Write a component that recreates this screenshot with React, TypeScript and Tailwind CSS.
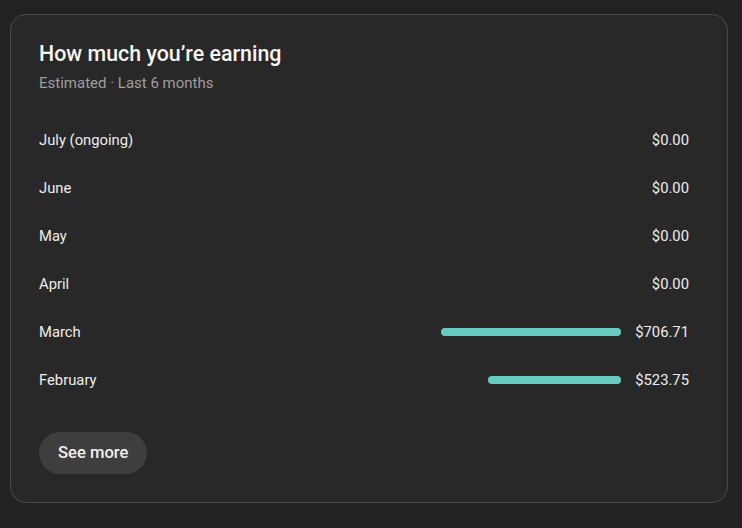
// Earnings card
const rows = [
  { month: 'July (ongoing)', amount: '$0.00', bar: 0 },
  { month: 'June', amount: '$0.00', bar: 0 },
  { month: 'May', amount: '$0.00', bar: 0 },
  { month: 'April', amount: '$0.00', bar: 0 },
  { month: 'March', amount: '$706.71', bar: 180 },
  { month: 'February', amount: '$523.75', bar: 133 },
]

export default function App() {
  return (
    <div className="min-h-[528px] bg-[#222222] pt-[14px] pl-[10px] pr-[14px] font-['Roboto',sans-serif]">
      <div className="w-[718px] h-[489px] rounded-[16px] border border-[#4a4a4a] bg-[#282828] px-[28px] pt-[27px]">
        <h2 className="text-[21.4px] leading-[24px] font-medium text-[#f5f5f5]">How much you’re earning</h2>
        <p className="mt-[7px] text-[15px] leading-[20px] text-[#9e9e9e]">Estimated · Last 6 months</p>

        {/* 월별 목록 */}
        <div className="mt-[23px] pr-[10px]">
          {rows.map((r) => (
            <div key={r.month} className="flex h-[48px] items-center">
              <span className="flex-1 text-[14.8px] text-[#ececec]">{r.month}</span>
              {r.bar > 0 && (
                <div className="h-[8px] rounded-full bg-[#67cdc1]" style={{ width: r.bar }} />
              )}
              <span className="ml-[14px] w-[54px] text-right text-[14.8px] text-[#ececec]">{r.amount}</span>
            </div>
          ))}
        </div>

        <button className="mt-[28px] h-[42px] rounded-full bg-[#3e3e3e] px-[19px] text-[16.6px] font-medium text-[#f0f0f0]">
          See more
        </button>
      </div>
    </div>
  )
}
